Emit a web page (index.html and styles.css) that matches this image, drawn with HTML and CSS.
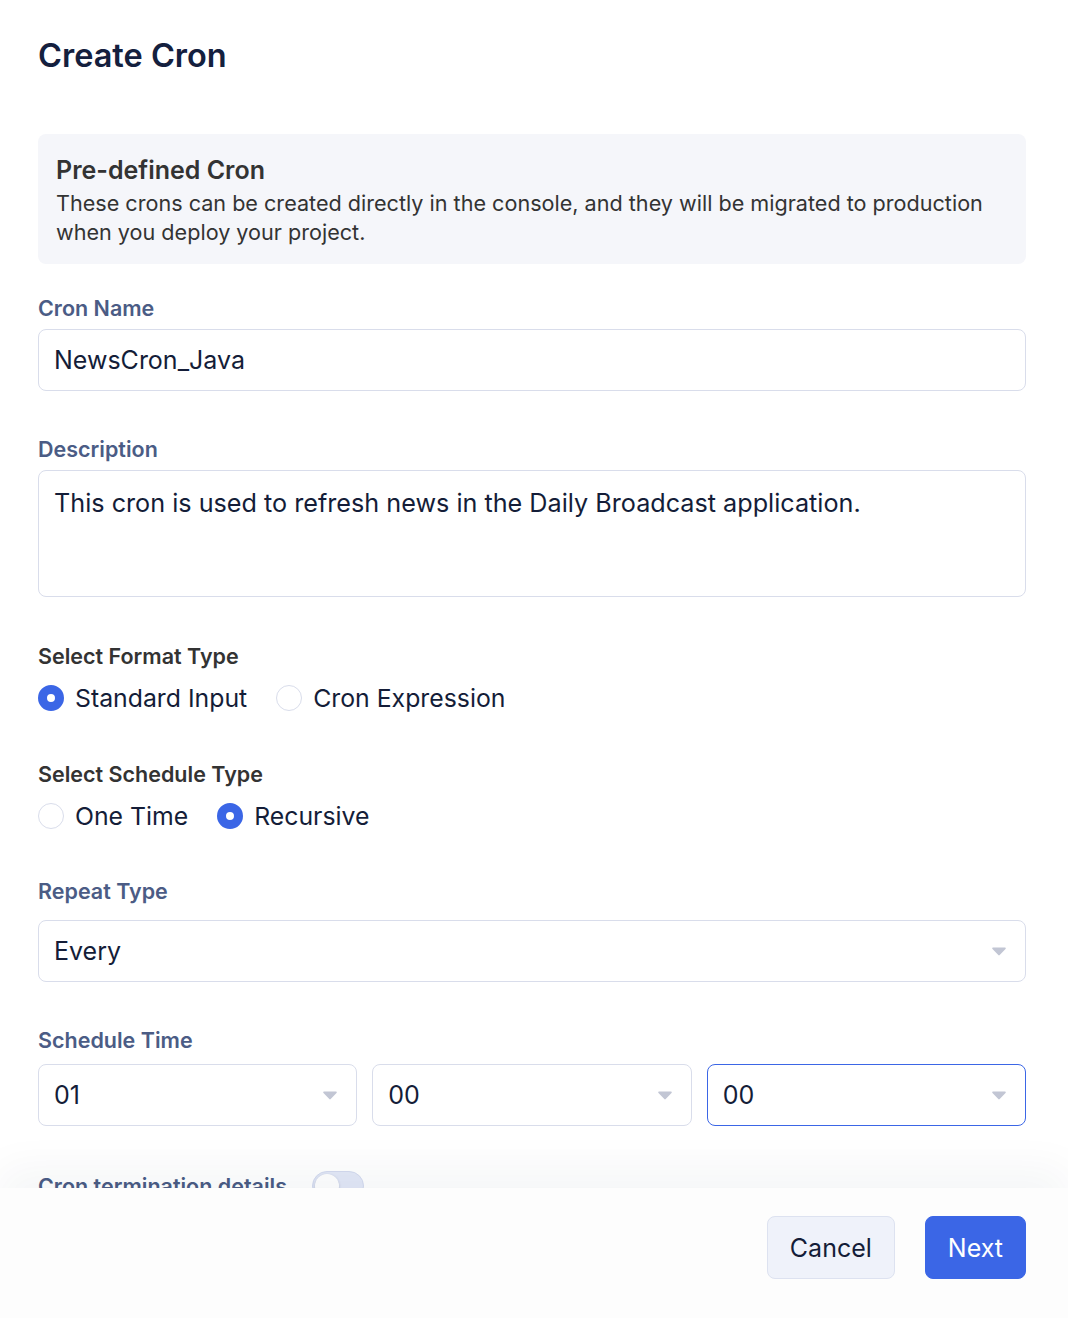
FILE: index.html
```html
<!DOCTYPE html>
<html lang="en">
<head>
  <meta charset="UTF-8" />
  <meta name="viewport" content="width=device-width, initial-scale=1.0"/>
  <title>Create Cron</title>
  <link rel="stylesheet" href="styles.css">
</head>
<body>
  <div class="modal">
    <div class="modal-body">
      <h1>Create Cron</h1>

      <div class="info-box">
        <h3>Pre-defined Cron</h3>
        <p>These crons can be created directly in the console, and they will be migrated to production when you deploy your project.</p>
      </div>

      <div class="field first">
        <label class="label">Cron Name</label>
        <div class="input">NewsCron_Java</div>
      </div>

      <div class="field">
        <label class="label">Description</label>
        <div class="input textarea">This cron is used to refresh news in the Daily Broadcast application.</div>
      </div>

      <div class="field group">
        <label class="label dark">Select Format Type</label>
        <div class="radios">
          <span class="radio checked"></span><span class="radio-text">Standard Input</span>
          <span class="radio"></span><span class="radio-text">Cron Expression</span>
        </div>
      </div>

      <div class="field group next">
        <label class="label dark">Select Schedule Type</label>
        <div class="radios">
          <span class="radio"></span><span class="radio-text">One Time</span>
          <span class="radio checked"></span><span class="radio-text">Recursive</span>
        </div>
      </div>

      <div class="field after-radio">
        <label class="label wide">Repeat Type</label>
        <div class="input select">
          <span>Every</span>
          <svg class="caret" width="14" height="9" viewBox="0 0 14 9"><path d="M1.2 0.5h11.6c0.9 0 1.3 1 0.7 1.6l-5.8 6c-0.4 0.4-1 0.4-1.4 0l-5.8-6c-0.6-0.6-0.2-1.6 0.7-1.6z" fill="#c2c6d4"/></svg>
        </div>
      </div>

      <div class="field">
        <label class="label mid">Schedule Time</label>
        <div class="time-row">
          <div class="input select">
            <span>01</span>
            <svg class="caret" width="14" height="9" viewBox="0 0 14 9"><path d="M1.2 0.5h11.6c0.9 0 1.3 1 0.7 1.6l-5.8 6c-0.4 0.4-1 0.4-1.4 0l-5.8-6c-0.6-0.6-0.2-1.6 0.7-1.6z" fill="#c2c6d4"/></svg>
          </div>
          <div class="input select">
            <span>00</span>
            <svg class="caret" width="14" height="9" viewBox="0 0 14 9"><path d="M1.2 0.5h11.6c0.9 0 1.3 1 0.7 1.6l-5.8 6c-0.4 0.4-1 0.4-1.4 0l-5.8-6c-0.6-0.6-0.2-1.6 0.7-1.6z" fill="#c2c6d4"/></svg>
          </div>
          <div class="input select focused">
            <span>00</span>
            <svg class="caret" width="14" height="9" viewBox="0 0 14 9"><path d="M1.2 0.5h11.6c0.9 0 1.3 1 0.7 1.6l-5.8 6c-0.4 0.4-1 0.4-1.4 0l-5.8-6c-0.6-0.6-0.2-1.6 0.7-1.6z" fill="#c2c6d4"/></svg>
          </div>
        </div>
      </div>

      <div class="toggle-row">
        <label class="label">Cron termination details</label>
        <span class="toggle"><span class="knob"></span></span>
      </div>
    </div>

    <div class="modal-footer">
      <button class="btn btn-light">Cancel</button>
      <button class="btn btn-primary">Next</button>
    </div>
  </div>
</body>
</html>
```

FILE: styles.css
```css
* {
  box-sizing: border-box;
}
body {
  margin: 0;
  font-family: Inter, "Noto Sans", sans-serif;
  background: #fff;
  color: #141d38;
}
.modal {
  height: 1318px;
  display: flex;
  flex-direction: column;
}
.modal-body {
  flex: 1;
  overflow: hidden;
  padding: 34px 42px 0 38px;
}
h1 {
  margin: 0;
  font-size: 32.5px;
  line-height: 44px;
  font-weight: 600;
  color: #14203e;
}
.info-box {
  margin-top: 56px;
  background: #f5f6fa;
  border-radius: 8px;
  padding: 21px 18px 17px;
  color: #333;
}
.info-box h3 {
  margin: 0;
  font-size: 25px;
  line-height: 30px;
  font-weight: 600;
}
.info-box p {
  margin: 4px 0 0;
  font-size: 21.6px;
  line-height: 29px;
}
.field {
  margin-top: 46px;
}
.field.first {
  margin-top: 32px;
}
.label {
  display: block;
  font-size: 21.5px;
  line-height: 24px;
  font-weight: 600;
  color: #4b5c85;
  margin-bottom: 9px;
}
.label.dark {
  color: #333;
  margin-bottom: 12px;
}
.label.wide {
  margin-bottom: 17px;
}
.label.mid {
  margin-bottom: 12px;
}
.input {
  height: 62px;
  border: 1px solid #d9ddeb;
  border-radius: 8px;
  padding: 0 19px 0 15px;
  font-size: 25px;
  display: flex;
  align-items: center;
  color: #141d38;
}
.textarea {
  height: 127px;
  align-items: flex-start;
  padding-top: 14px;
  line-height: 36px;
  font-size: 25.2px;
}
.select {
  justify-content: space-between;
}
.focused {
  border-color: #3b66e6;
}
.group {
  margin-top: 47px;
}
.group.next {
  margin-top: 46px;
}
.radios {
  display: flex;
  align-items: center;
  height: 36px;
}
.radio {
  width: 26px;
  height: 26px;
  border-radius: 50%;
  border: 1px solid #d9ddeb;
  background: #fff;
  margin-right: 11px;
}
.radio.checked {
  border: 9px solid #3b66e6;
}
.radio-text {
  font-size: 24.8px;
  margin-right: 29px;
}
.after-radio {
  margin-top: 45px;
}
.time-row {
  display: grid;
  grid-template-columns: repeat(3, 1fr);
  gap: 15px;
}
.toggle-row {
  margin-top: 45px;
  display: flex;
  align-items: center;
  gap: 25px;
}
.toggle-row .label {
  margin: 0;
}
.toggle {
  width: 52px;
  height: 30px;
  border-radius: 15px;
  background: #e3e8f7;
  border: 1px solid #d3daef;
  padding: 2px;
}
.knob {
  display: block;
  width: 24px;
  height: 24px;
  border-radius: 50%;
  background: #fff;
  box-shadow: 0 1px 3px rgba(30, 40, 80, 0.2);
}
.modal-footer {
  position: relative;
  height: 130px;
  background: #fdfdfd;
  display: flex;
  justify-content: flex-end;
  align-items: flex-start;
  gap: 30px;
  padding: 28px 42px 0 0;
  box-shadow: 0 -20px 40px rgba(30, 40, 80, 0.045);
}
.btn {
  height: 63px;
  border-radius: 8px;
  font-family: Inter, "Noto Sans", sans-serif;
  font-size: 25px;
  padding: 0 22px;
  cursor: pointer;
}
.btn-light {
  background: #eff2fa;
  border: 1px solid #dde2f0;
  color: #141d38;
}
.btn-primary {
  background: #3b66e6;
  border: 1px solid #3b66e6;
  color: #fff;
}
```
